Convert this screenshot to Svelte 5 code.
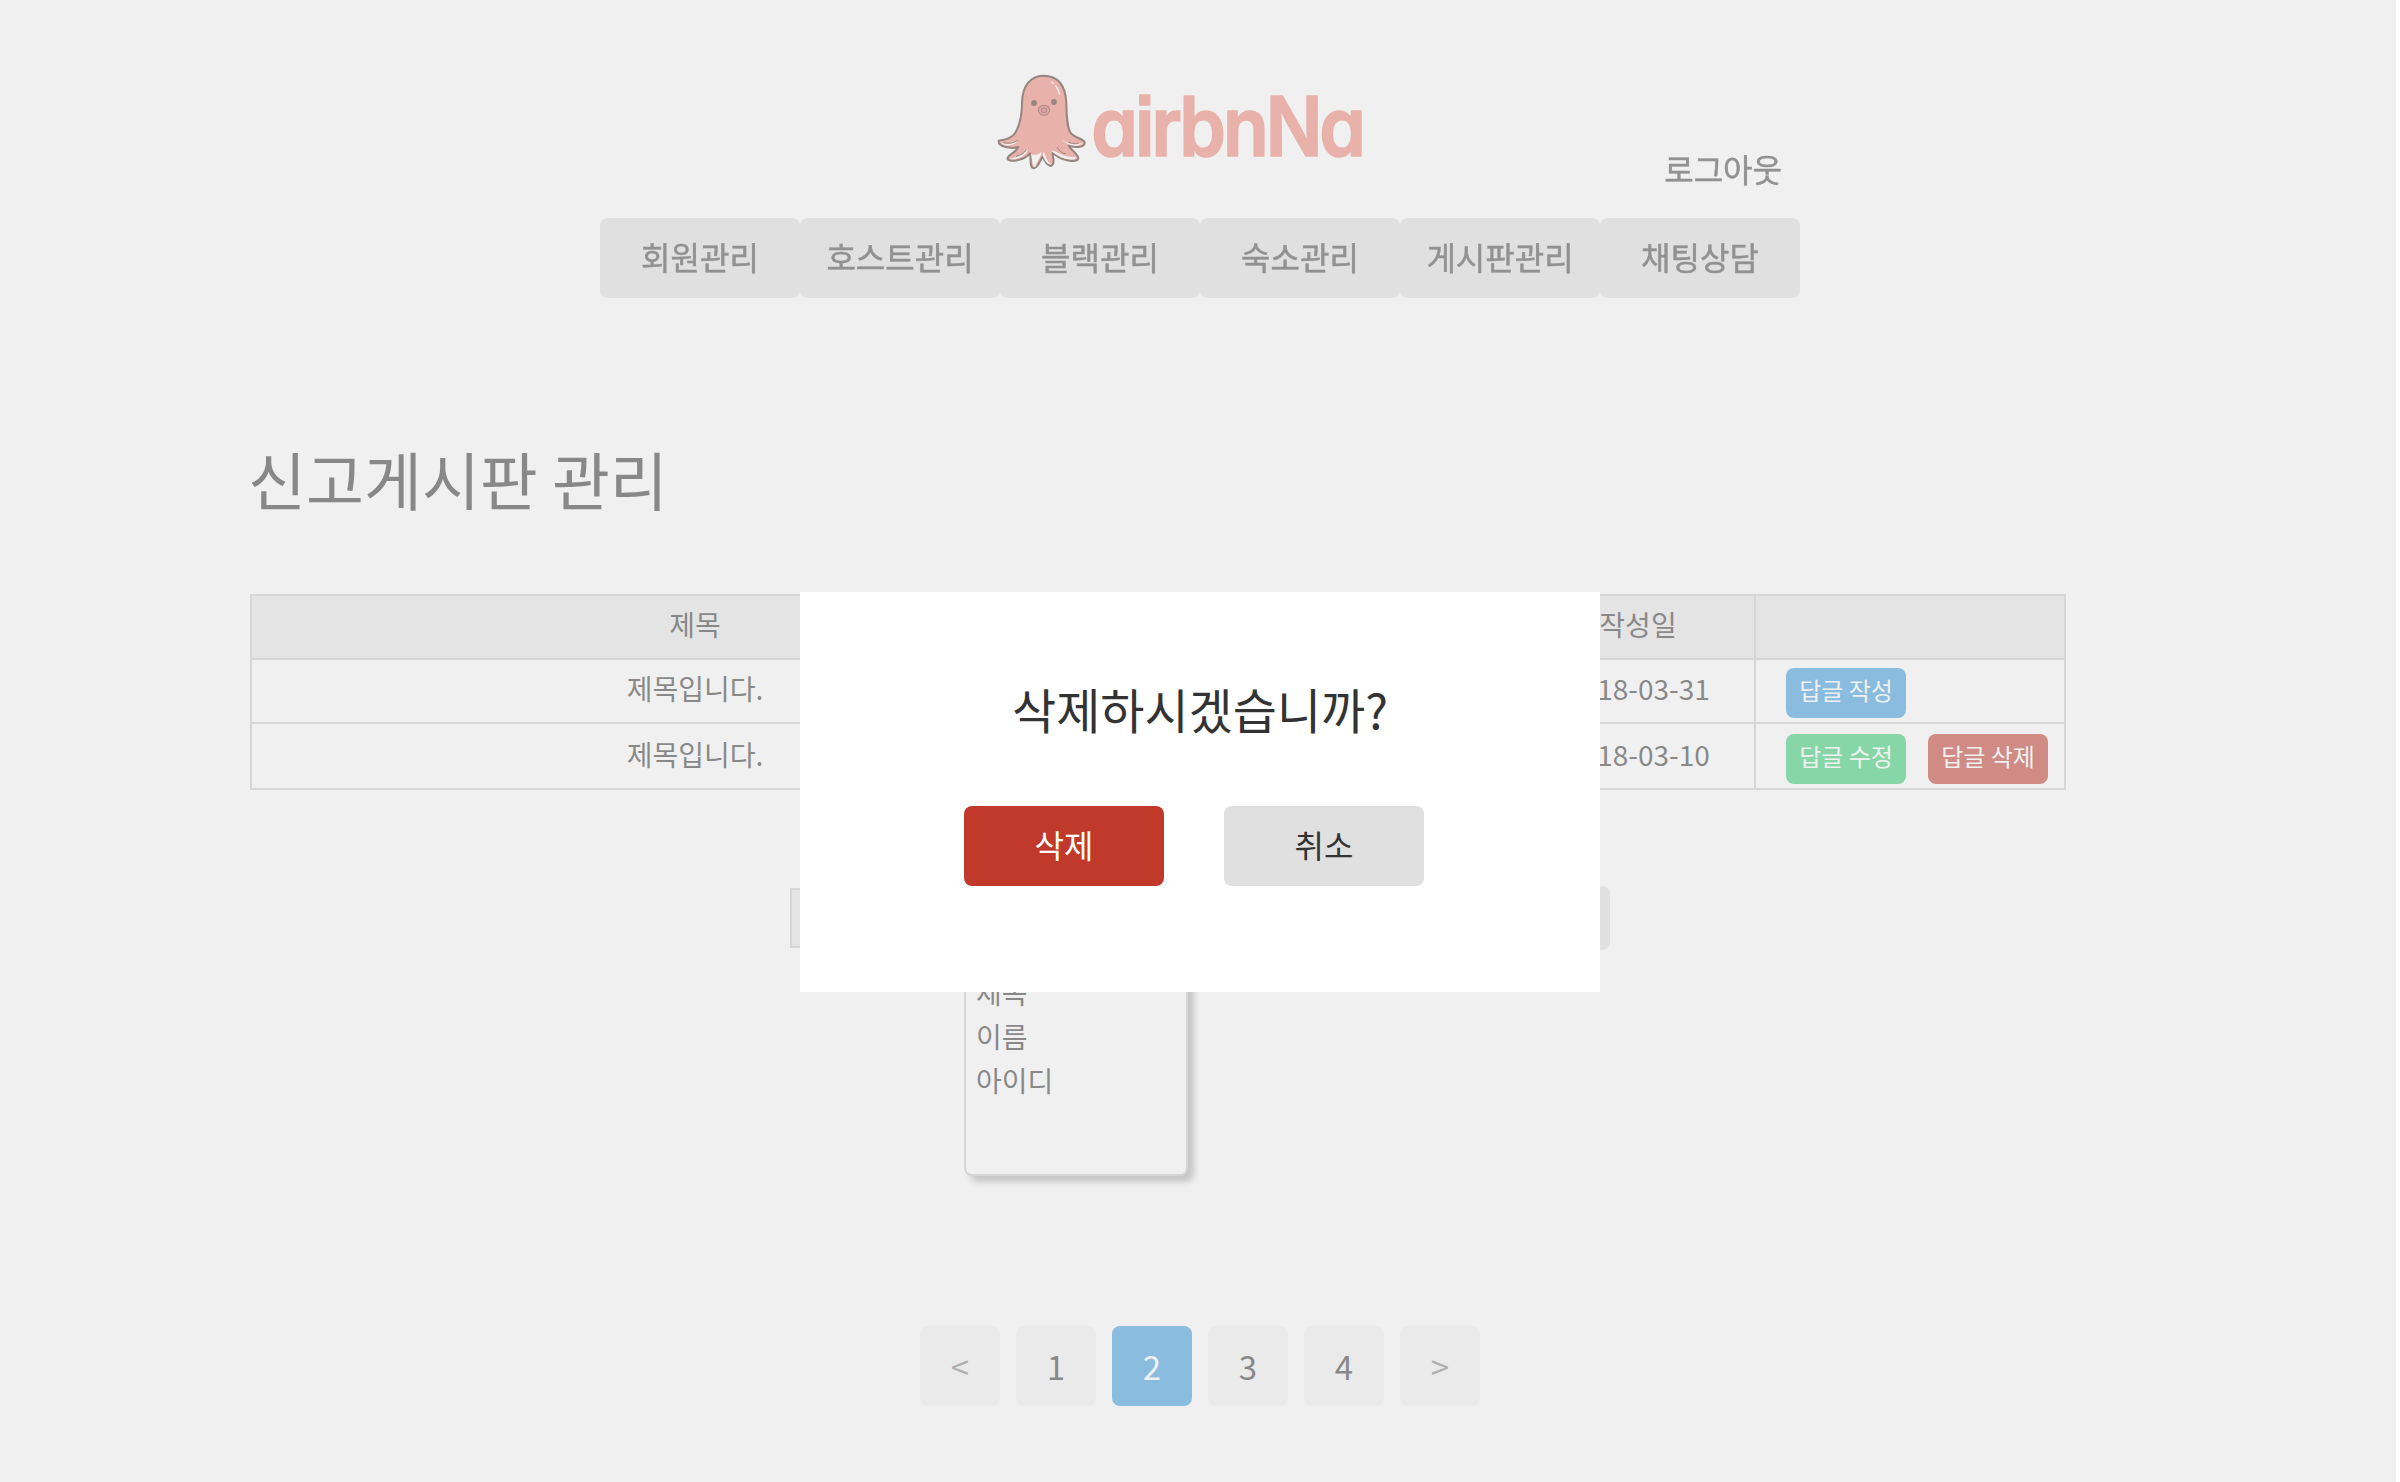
<script>
  const menus = ['회원관리', '호스트관리', '블랙관리', '숙소관리', '게시판관리', '채팅상담'];
  const posts = [
    { title: '제목입니다.', date: '2018-03-31', actions: [{ label: '답글 작성', kind: 'write' }] },
    {
      title: '제목입니다.',
      date: '2018-03-10',
      actions: [
        { label: '답글 수정', kind: 'edit' },
        { label: '답글 삭제', kind: 'remove' }
      ]
    }
  ];
  const options = ['제목', '이름', '아이디'];
  const pages = ['<', '1', '2', '3', '4', '>'];
  const current = '2';
</script>

<div class="page">
  <header>
    <svg class="logo" viewBox="0 0 1200 390" aria-label="airbnNa">
      <path
        class="body"
        d="M56 242 C68 240 94 238 106 218 C121 192 126 160 126 128 C127 80 150 47 190 47 C238 47 257 78 259 130 C260 170 261 202 271 217 C282 236 306 232 314 247 C315 262 292 264 266 257 C275 272 296 284 295 296 C290 309 245 303 218 279 C219 298 226 312 213 318 C200 318 194 300 188 290 C179 302 176 324 160 325 C148 322 154 300 150 280 C136 298 98 308 84 299 C76 288 106 280 115 261 C95 267 54 262 56 242Z"
      />
      <path class="white" d="M62 246 C76 257 98 250 114 240 C108 257 70 263 62 246Z" />
      <path class="white" d="M88 296 C110 294 130 282 143 267 C144 286 106 304 88 296Z" />
      <path class="white" d="M153 281 C162 288 178 284 184 275 C186 290 170 302 166 321 C156 320 158 300 153 281Z" />
      <path class="white" d="M192 275 C198 292 204 308 215 313 C204 316 192 300 188 284Z" />
      <path class="white" d="M214 271 C236 276 248 292 289 292 C288 306 236 298 214 271Z" />
      <path class="white" d="M245 238 C266 256 290 254 308 248 C300 262 262 260 245 238Z" />
      <path class="line" d="M114 240 C100 251 82 252 70 247 M139 269 C132 280 122 286 108 289 M232 262 C236 272 246 279 257 282 M266 246 C276 253 288 252 296 249" />
      <path class="shine" d="M215 67 L220 70 M227 78 C234 86 237 94 239 102" />
      <ellipse class="eye" cx="162" cy="129" rx="8.5" ry="9" />
      <ellipse class="eye" cx="222" cy="126" rx="8.5" ry="9" />
      <ellipse class="mouth" cx="192" cy="151" rx="17" ry="15" />
      <ellipse class="mouth" cx="192" cy="151" rx="8" ry="6.5" />
      <text x="334" y="287" textLength="815" lengthAdjust="spacingAndGlyphs">airbnNa</text>
    </svg>
    <a class="logout">로그아웃</a>
  </header>

  <nav>
    {#each menus as menu}
      <a><span>{menu}</span></a>
    {/each}
  </nav>

  <main>
    <h1>신고게시판 관리</h1>

    <div class="table">
      <div class="row head">
        <div class="cell title">제목</div>
        <div class="cell"></div>
        <div class="cell">작성일</div>
        <div class="cell"></div>
      </div>
      {#each posts as post}
        <div class="row">
          <div class="cell title">{post.title}</div>
          <div class="cell"></div>
          <div class="cell">{post.date}</div>
          <div class="cell actions">
            {#each post.actions as action}
              <button class="small {action.kind}">{action.label}</button>
            {/each}
          </div>
        </div>
      {/each}
    </div>
  </main>

  <div class="search">
    <div class="select"></div>
    <div class="field"></div>
    <div class="go"></div>
    <ul class="options">
      {#each options as option}
        <li>{option}</li>
      {/each}
    </ul>
  </div>

  <div class="pagination">
    {#each pages as page}
      <a class:active={page === current} class:arrow={page === '<' || page === '>'}>{page}</a>
    {/each}
  </div>

  <div class="overlay"></div>
  <div class="modal">
    <p>삭제하시겠습니까?</p>
    <div class="choices">
      <button class="confirm">삭제</button>
      <button>취소</button>
    </div>
  </div>
</div>

<style>
  :global(body) {
    margin: 0;
    background: #fff;
  }
  .page {
    position: relative;
    box-sizing: border-box;
    width: 2400px;
    height: 1482px;
    overflow: hidden;
    font-family: 'Noto Sans CJK KR', sans-serif;
    color: #333;
  }
  header {
    display: flex;
    justify-content: space-between;
    align-items: flex-end;
    height: 218px;
    box-sizing: border-box;
    padding: 0 618px 26px 980px;
  }
  .logo {
    width: 400px;
    height: 130px;
    margin-bottom: 2px;
    overflow: visible;
  }
  .logo text {
    font: 600 246px Inter, sans-serif;
    font-feature-settings: 'cv11' 1, 'ss07' 1;
    letter-spacing: -10px;
    fill: #f08274;
    stroke: #f08274;
    stroke-width: 5;
    stroke-linejoin: round;
  }
  .body {
    fill: #f08274;
    stroke: #4c2e20;
    stroke-width: 6;
    stroke-linejoin: round;
  }
  .white {
    fill: #fff;
  }
  .line {
    fill: none;
    stroke: #4c2e20;
    stroke-width: 3;
  }
  .shine {
    fill: none;
    stroke: #fff;
    stroke-width: 4;
    stroke-linecap: round;
  }
  .eye {
    fill: #4c2e20;
  }
  .mouth {
    fill: #f06e74;
    stroke: #84443c;
    stroke-width: 4;
  }
  .logout,
  nav span {
    display: block;
    color: #444;
    filter: blur(0.6px);
    -webkit-text-stroke: 0.5px #444;
  }
  .logout {
    font-size: 32px;
    line-height: 48px;
  }
  nav {
    display: flex;
    width: 1200px;
    margin: 0 auto;
  }
  nav a {
    width: 200px;
    height: 80px;
    border-radius: 8px;
    background: #e0e0e0;
    font-size: 32px;
    line-height: 77px;
    text-align: center;
  }
  main {
    width: 1816px;
    margin: 136px 0 0 250px;
  }
  h1 {
    margin: 0;
    height: 160px;
    font-size: 63px;
    font-weight: 400;
    line-height: 88px;
    text-indent: -2px;
  }
  .table {
    box-sizing: border-box;
    border: 2px solid #ccc;
    font-size: 28px;
  }
  .row {
    display: grid;
    grid-template-columns: 886px 384px 232px 1fr;
    height: 62px;
  }
  .row + .row {
    border-top: 2px solid #ccc;
  }
  .row:last-child {
    height: 64px;
  }
  .head {
    background: #e8e8e8;
  }
  .cell {
    line-height: 57px;
    text-align: center;
  }
  .row:last-child .cell {
    line-height: 60px;
  }
  .cell:last-child {
    border-left: 2px solid #ccc;
  }
  .actions {
    display: flex;
    align-items: flex-end;
    gap: 22px;
    padding: 0 0 4px 30px;
  }
  button {
    border: 0;
    padding: 0 0 5px;
    border-radius: 8px;
    font-family: inherit;
    color: #333;
    background: #e0e0e0;
  }
  .small {
    width: 120px;
    height: 50px;
    padding-bottom: 7px;
    font-size: 24px;
    color: #fff;
  }
  .write {
    background: #3498db;
  }
  .edit {
    background: #2ecc71;
  }
  .remove {
    background: #c0392b;
  }
  .search {
    position: relative;
    display: flex;
    align-items: center;
    width: 820px;
    height: 64px;
    margin: 96px auto 0;
  }
  .select {
    box-sizing: border-box;
    width: 174px;
    height: 60px;
    border: 2px solid #ccc;
    background: #e8e8e8;
  }
  .field {
    flex: 1;
  }
  .go {
    width: 120px;
    height: 64px;
    border-radius: 8px;
    background: #e0e0e0;
  }
  .options {
    position: absolute;
    left: 174px;
    top: 62px;
    box-sizing: border-box;
    width: 224px;
    height: 228px;
    margin: 0;
    padding: 20px 10px;
    border: 2px solid #ccc;
    border-radius: 8px;
    background: #fff;
    box-shadow: 6px 6px 6px rgba(0, 0, 0, 0.32);
    list-style: none;
    font-size: 28px;
    line-height: 44px;
  }
  .pagination {
    display: flex;
    justify-content: center;
    gap: 16px;
    margin-top: 376px;
  }
  .pagination a {
    width: 80px;
    height: 80px;
    border-radius: 8px;
    background: #f3f3f3;
    font-size: 33px;
    line-height: 80px;
    text-align: center;
  }
  .pagination .arrow {
    color: #808080;
  }
  .pagination .active {
    background: #3498db;
    color: #fff;
  }
  .overlay {
    position: absolute;
    inset: 0 4px 0 0;
    background: #e0e0e0;
    opacity: 0.495;
  }
  .modal {
    position: absolute;
    left: 800px;
    top: 592px;
    box-sizing: border-box;
    width: 800px;
    height: 400px;
    padding-top: 81px;
    background: #fff;
  }
  .modal p {
    margin: 0;
    font-size: 48px;
    line-height: 70px;
    text-align: center;
  }
  .choices {
    display: flex;
    gap: 60px;
    padding: 63px 0 0 164px;
  }
  .choices button {
    width: 200px;
    height: 80px;
    font-size: 32px;
  }
  .choices .confirm {
    background: #c0392b;
    color: #fff;
  }
</style>
